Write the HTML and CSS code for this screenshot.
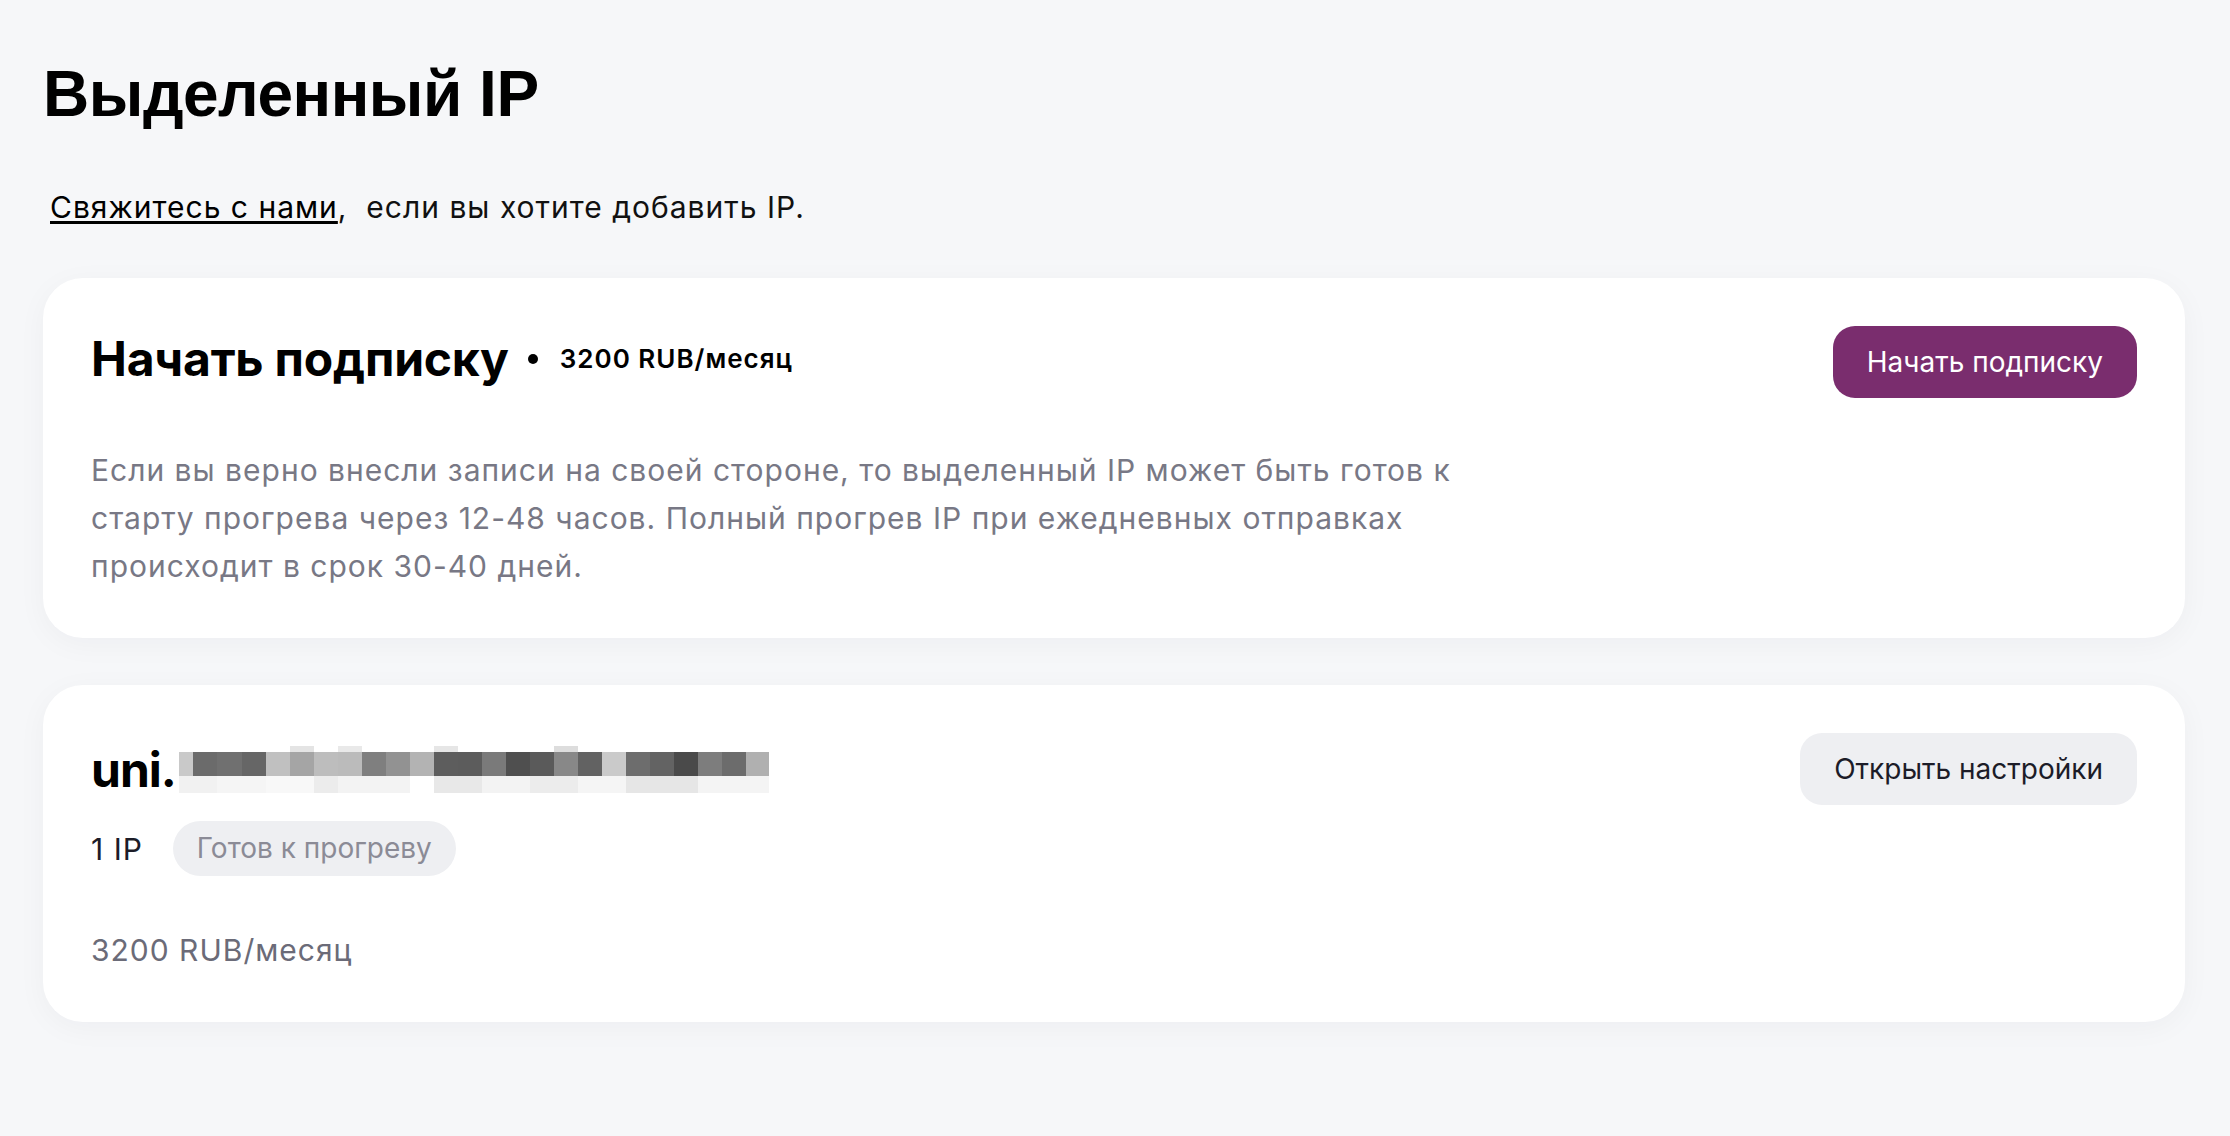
FILE: index.html
```html
<!DOCTYPE html>
<html lang="ru">
<head>
    <meta charset="UTF-8">
    <meta name="viewport" content="width=device-width, initial-scale=1.0">
    <title>Выделенный IP</title>
    <link rel="stylesheet" href="styles.css">
</head>
<body>
    <main class="page">
        <h1 class="page-title">Выделенный IP</h1>
        <p class="page-note"><a href="#" class="link">Свяжитесь с нами</a>,&nbsp; если вы хотите добавить IP.</p>

        <section class="card">
            <div class="card-head">
                <div class="card-title-row">
                    <h2 class="card-title">Начать подписку</h2>
                    <span class="dot"></span>
                    <span class="card-price">3200 RUB/месяц</span>
                </div>
                <button class="button button-primary">Начать подписку</button>
            </div>
            <p class="card-text">Если вы верно внесли записи на своей стороне, то выделенный IP может быть готов к старту прогрева через 12-48 часов. Полный прогрев IP при ежедневных отправках происходит в срок 30-40 дней.</p>
        </section>

        <section class="card">
            <div class="card-head">
                <div class="domain">
                    <span class="domain-name">uni.</span>
                    <!-- hidden part of the domain -->
                    <svg class="domain-mask" width="590" height="47" viewBox="0 0 590 47">
                        <g>
                            <rect x="0" y="6" width="14" height="24" fill="#c9c9c9"/>
                            <rect x="14" y="6" width="24" height="24" fill="#6b6b6b"/>
                            <rect x="38" y="6" width="25" height="24" fill="#707070"/>
                            <rect x="63" y="6" width="24" height="24" fill="#666666"/>
                            <rect x="87" y="6" width="24" height="24" fill="#c0c0c0"/>
                            <rect x="111" y="0" width="24" height="6" fill="#e4e4e4"/>
                            <rect x="111" y="6" width="24" height="24" fill="#a5a5a5"/>
                            <rect x="135" y="6" width="24" height="24" fill="#bdbdbd"/>
                            <rect x="159" y="0" width="24" height="6" fill="#e9e9e9"/>
                            <rect x="159" y="6" width="24" height="24" fill="#bbbbbb"/>
                            <rect x="183" y="6" width="24" height="24" fill="#7f7f7f"/>
                            <rect x="207" y="6" width="24" height="24" fill="#929292"/>
                            <rect x="231" y="6" width="24" height="24" fill="#b3b3b3"/>
                            <rect x="255" y="0" width="24" height="6" fill="#e6e6e6"/>
                            <rect x="255" y="6" width="24" height="24" fill="#5d5d5d"/>
                            <rect x="279" y="6" width="24" height="24" fill="#5c5c5c"/>
                            <rect x="303" y="6" width="24" height="24" fill="#7a7a7a"/>
                            <rect x="327" y="6" width="24" height="24" fill="#4f4f4f"/>
                            <rect x="351" y="6" width="24" height="24" fill="#5a5a5a"/>
                            <rect x="375" y="0" width="24" height="6" fill="#dddddd"/>
                            <rect x="375" y="6" width="24" height="24" fill="#888888"/>
                            <rect x="399" y="6" width="24" height="24" fill="#626262"/>
                            <rect x="423" y="6" width="24" height="24" fill="#cacaca"/>
                            <rect x="447" y="6" width="24" height="24" fill="#6d6d6d"/>
                            <rect x="471" y="6" width="24" height="24" fill="#636363"/>
                            <rect x="495" y="6" width="24" height="24" fill="#4a4a4a"/>
                            <rect x="519" y="6" width="24" height="24" fill="#7d7d7d"/>
                            <rect x="543" y="6" width="24" height="24" fill="#6c6c6c"/>
                            <rect x="567" y="6" width="23" height="24" fill="#b0b0b0"/>
                        </g>
                        <g>
                            <rect x="0" y="30" width="38" height="17" fill="#f1f1f1"/>
                            <rect x="38" y="30" width="49" height="17" fill="#f5f5f5"/>
                            <rect x="87" y="30" width="48" height="17" fill="#f8f8f8"/>
                            <rect x="135" y="30" width="24" height="17" fill="#ececec"/>
                            <rect x="159" y="30" width="72" height="17" fill="#f3f3f3"/>
                            <rect x="255" y="30" width="48" height="17" fill="#e8e8e8"/>
                            <rect x="303" y="30" width="48" height="17" fill="#f3f3f3"/>
                            <rect x="351" y="30" width="48" height="17" fill="#ececec"/>
                            <rect x="399" y="30" width="48" height="17" fill="#f5f5f5"/>
                            <rect x="447" y="30" width="72" height="17" fill="#e6e6e6"/>
                            <rect x="519" y="30" width="71" height="17" fill="#f4f4f4"/>
                        </g>
                    </svg>
                </div>
                <button class="button button-light">Открыть настройки</button>
            </div>
            <div class="ip-row">
                <span class="ip-count">1 IP</span>
                <span class="badge">Готов к прогреву</span>
            </div>
            <p class="card-sub">3200 RUB/месяц</p>
        </section>
    </main>
</body>
</html>
```

FILE: styles.css
```css
body {
    margin: 0;
    background-color: #f6f7f9;
    font-family: Inter, "Noto Sans", sans-serif;
    color: #1c1c28;
}
.page {
    padding: 56px 45px 80px 43px;
}
.page-title {
    margin: 0;
    font-family: "Liberation Sans", Arial, sans-serif;
    font-size: 64px;
    line-height: 76px;
    font-weight: bold;
    letter-spacing: -0.5px;
    color: #000;
}
.page-note {
    margin: 57px 0 53px;
    padding-left: 7px;
    font-size: 30px;
    line-height: 36px;
    letter-spacing: 1px;
    color: #111;
}
.link {
    color: #000;
    text-decoration: underline;
    text-decoration-thickness: 3px;
    text-underline-offset: 3px;
}
.card {
    background-color: #fff;
    border-radius: 40px;
    padding: 48px;
    margin-bottom: 47px;
    box-shadow: 0 6px 30px rgba(30, 30, 60, 0.04);
}
.card-head {
    display: flex;
    justify-content: space-between;
    align-items: center;
}
.card-title-row {
    display: flex;
    align-items: center;
    margin-top: -7px;
}
.card-title {
    margin: 0;
    font-size: 48px;
    font-weight: 700;
    letter-spacing: -0.2px;
    color: #000;
}
.dot {
    width: 10px;
    height: 10px;
    border-radius: 50%;
    background-color: #000;
    margin: 0 22px 0 19px;
}
.card-price {
    font-size: 26px;
    font-weight: 600;
    letter-spacing: 1px;
    color: #000;
}
.card-text {
    margin: 48px 0 0;
    max-width: 1360px;
    font-size: 30px;
    line-height: 48px;
    letter-spacing: 1px;
    color: #787885;
}
.button {
    font-family: Inter, "Noto Sans", sans-serif;
    font-size: 28px;
    border: none;
    border-radius: 22px;
    padding: 0 34px;
    height: 72px;
    cursor: pointer;
}
.button-primary {
    background-color: #7a2d6e;
    color: #fff;
}
.button-light {
    background-color: #eeeff2;
    color: #1c1c28;
}
.domain {
    display: flex;
    align-items: center;
}
.domain-name {
    font-size: 48px;
    font-weight: 700;
    color: #000;
    letter-spacing: -1px;
}
.domain-mask {
    display: block;
    margin-left: 3px;
}
.ip-row {
    display: flex;
    align-items: center;
    margin-top: 16px;
}
.ip-count {
    font-size: 30px;
    letter-spacing: 1px;
    color: #1c1c28;
    margin-right: 30px;
}
.badge {
    background-color: #eeeff2;
    color: #8b8b96;
    font-size: 28px;
    line-height: 55px;
    padding: 0 24px;
    border-radius: 28px;
}
.card-sub {
    margin: 50px 0 0;
    font-size: 30px;
    line-height: 48px;
    letter-spacing: 1px;
    color: #6b6b78;
}
```
